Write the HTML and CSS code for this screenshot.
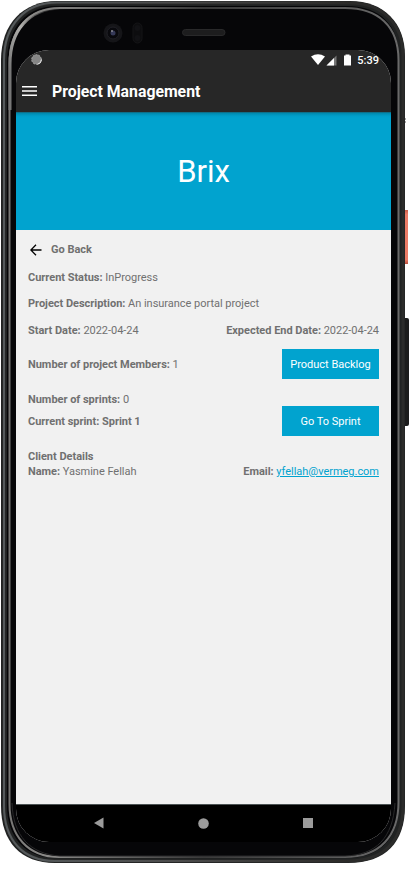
FILE: index.html
```html
<!DOCTYPE html>
<html lang="en">
<head>
<meta charset="utf-8">
<title>Project Management</title>
<link rel="stylesheet" href="styles.css">
</head>
<body>
<div class="phone">
  <svg class="shell" width="412" height="869" viewBox="0 0 412 869" aria-hidden="true">
    <defs>
      <linearGradient id="edge" x1="0" y1="0" x2="1" y2="0">
        <stop offset="0" stop-color="#555a5c"/><stop offset=".5" stop-color="#4c4c4c"/><stop offset="1" stop-color="#2b2a28"/>
      </linearGradient>
      <linearGradient id="rim" gradientUnits="userSpaceOnUse" x1="8" y1="0" x2="400" y2="0">
        <stop offset="0" stop-color="#777674"/><stop offset=".1" stop-color="#8b8a88"/><stop offset=".5" stop-color="#3a3a3a"/><stop offset="1" stop-color="#6a6a6a"/>
      </linearGradient>
      <linearGradient id="shine" gradientUnits="userSpaceOnUse" x1="10" y1="70" x2="70" y2="10">
        <stop offset="0" stop-color="#777"/><stop offset=".45" stop-color="#b0afac"/><stop offset="1" stop-color="#55555500"/>
      </linearGradient>
      <linearGradient id="power" x1="0" y1="0" x2="0" y2="1">
        <stop offset="0" stop-color="#c85c48"/><stop offset=".08" stop-color="#ec7b66"/><stop offset=".92" stop-color="#ec7b66"/><stop offset="1" stop-color="#b84f3d"/>
      </linearGradient>
    </defs>
    <rect x="403" y="210" width="5" height="54" fill="url(#power)"/>
    <rect x="403" y="318" width="6" height="108" rx="2" fill="#1c1c1c"/>
    <path d="M404 119h2M404 122h2" stroke="#555"/>
    <path d="M57 1H350C384 1 405 23 405 56V806C405 842 386 863 348 863H55C21 863 1 842 1 806V60C1 24 23 1 57 1Z" fill="#202222"/>
    <path d="M57 3H350C383 3 403 24 403 56V806C403 841 384 861 348 861H55C23 861 4 840 4 806V60C4 26 24 3 57 3Z" fill="none" stroke="#2b2b2a" stroke-width="3"/>
    <path d="M350 2.500H57C24 2.500 4 26 4 60V806C4 840 23 861 55 861H348" fill="none" stroke="url(#edge)" stroke-width="2"/>
    <path d="M57 6H347C380 6 399 25 399 58V804C399 837 381 858 347 858H56C26 858 7 838 7 805V62C7 27 27 6 57 6Z" fill="#060608"/>
    <path d="M60 8H345C378 8 398.500 26 398.500 60V802C398.500 836 380 857 345 857H59C28 857 9.500 836 9.500 804V64C9.500 29 29 8 60 8Z" fill="none" stroke="url(#rim)" stroke-width="2"/>
    <path d="M10 110V64C10 30 29 9 60 8H76" fill="none" stroke="url(#shine)" stroke-width="3"/>
    <path d="M12 803C13 836 30 854 60 856H345C376 855 393 838 395 803" fill="none" stroke="#29292a"/>
    <circle cx="113" cy="33" r="9.500" fill="#151518"/>
    <circle cx="113" cy="33" r="6" fill="#09090d" stroke="#202026"/>
    <circle cx="113" cy="33" r="2.500" fill="#353958"/>
    <circle cx="112" cy="31" r="1" fill="#8c8c94"/>
    <rect x="133" y="23" width="9" height="20" rx="4.500" fill="#0d0d0f" stroke="#151517"/>
    <circle cx="137.500" cy="28" r="3" fill="#121215"/><circle cx="137.500" cy="38" r="3" fill="#121215"/>
    <rect x="182.500" y="29.500" width="42.500" height="6" rx="3" fill="#1d1d1e" stroke="#29292a"/>
  </svg>

  <div class="screen">
    <header class="header">
      <div class="status">
        <svg width="11" height="11" viewBox="0 0 11 11"><circle cx="5.500" cy="5.500" r="4.800" fill="#858585" stroke="#a8a8a8" stroke-dasharray="2 1"/><path d="M10.500 5.500a5 5 0 0 1-4 4.800" fill="none" stroke="#eee"/></svg>
        <div class="indicators">
          <svg width="43" height="12" viewBox="0 0 43 12" fill="#fff">
            <path d="M0 2.600Q7-2 14 2.600L7 11Z"/>
            <path d="M15.500 11.500L25.500 1.500V11.500Z" fill="#777"/><path d="M15.500 11.500L23 4V11.500Z"/>
            <path d="M34.500 .5h4v1h1.500v10h-7v-10h1.500Z"/>
          </svg>
          <span class="clock">5:39</span>
        </div>
      </div>
      <div class="titlebar">
        <svg width="15" height="10" viewBox="0 0 15 10"><path d="M0 .8h15M0 5h15M0 9.200h15" stroke="#fff" stroke-width="1.500"/></svg>
        <h1 class="title">Project Management</h1>
      </div>
    </header>

    <section class="hero"><h2 class="project">Brix</h2></section>

    <main class="details">
      <div class="back">
        <svg width="12" height="12" viewBox="0 0 12 12"><path d="M11.500 6H1M6 .8L.8 6L6 11.200" fill="none" stroke="#000" stroke-width="1.300"/></svg>
        <b>Go Back</b>
      </div>
      <div class="row status-row"><span><b>Current Status:</b> InProgress</span></div>
      <div class="row desc-row"><span><b>Project Description:</b> An insurance portal project</span></div>
      <div class="row dates-row"><span><b>Start Date:</b> 2022-04-24</span><span><b>Expected End Date:</b> 2022-04-24</span></div>
      <div class="row members-row"><span><b>Number of project Members:</b> 1</span><button class="button">Product Backlog</button></div>
      <div class="row sprints-row"><span><b>Number of sprints:</b> 0</span></div>
      <div class="row sprint-row"><b>Current sprint: Sprint 1</b><button class="button">Go To Sprint</button></div>
      <div class="row client-row"><b>Client Details</b></div>
      <div class="row"><span><b>Name:</b> Yasmine Fellah</span><span><b>Email:</b> <span class="link">yfellah@vermeg.com</span></span></div>
    </main>

    <nav class="nav">
      <svg width="10" height="12" viewBox="0 0 10 12"><path d="M0 6L9.500 .5V11.500Z" fill="#9b9b9b"/></svg>
      <svg width="11" height="11" viewBox="0 0 11 11"><circle cx="5.500" cy="5.500" r="5.300" fill="#9b9b9b"/></svg>
      <svg width="10" height="10" viewBox="0 0 10 10"><rect width="10" height="10" fill="#9b9b9b"/></svg>
    </nav>
  </div>
</div>
</body>
</html>
```
FILE: styles.css
```css
* { box-sizing: border-box; }
html, body { margin: 0; height: 869px; overflow: hidden; background: #fff; }
body { font-family: Roboto, sans-serif; font-size: 11px; line-height: 15px; color: #707070; }
svg { display: block; flex: none; }
b { font-weight: 700; }

.phone { position: relative; width: 412px; height: 869px; padding: 50px 21px 27px 16px; }
.shell { position: absolute; inset: 0; }
.screen { position: relative; display: flex; flex-direction: column; height: 792px; border-radius: 33px; overflow: hidden; background: #f1f1f1; }

.header { height: 62px; background: #272727; color: #fff; }
.status { display: flex; justify-content: space-between; align-items: center; height: 19px; padding: 0 12px 0 15px; }
.indicators { display: flex; align-items: center; gap: 3px; }
.clock { font-size: 11px; font-weight: 500; padding-top: 1px; }
.titlebar { display: flex; align-items: center; gap: 15px; height: 44px; padding-left: 6px; }
.title { margin: 1px 0 0; font-size: 15.8px; font-weight: 700; line-height: 20px; }

.hero { display: flex; align-items: center; justify-content: center; height: 118px; background: linear-gradient(#1b5868 0, #0088ad 1px, #009fca 4px, #01a3cf 6px); color: #fff; }
.project { margin: 2px 0 0; font-size: 31px; font-weight: 400; line-height: 36px; }

.details { flex: 1; padding: 12px 12px 0; }
.back { display: flex; align-items: center; gap: 9px; height: 15px; padding-left: 2px; margin-bottom: 13px; }
.row { display: flex; align-items: center; justify-content: space-between; height: 15px; white-space: nowrap; letter-spacing: -0.025px; }
.status-row { margin-bottom: 11px; }
.desc-row { margin-bottom: 12px; }
.dates-row { margin-bottom: 11px; }
.members-row { height: 30px; margin-bottom: 13px; }
.sprints-row { margin-bottom: -1px; }
.sprint-row { height: 30px; margin-bottom: 13px; }
.client-row { margin-bottom: 0; }
.button { width: 97px; height: 30px; padding: 0; border: 0; background: #01a3cf; color: #fff; font: 11px/15px Roboto, sans-serif; }
.link { color: #01a3cf; text-decoration: underline; }

.nav { display: flex; align-items: center; justify-content: space-between; height: 38px; padding: 0 78px 1px 78px; border-top: 1px solid #4c5354; background: #000; }
```
